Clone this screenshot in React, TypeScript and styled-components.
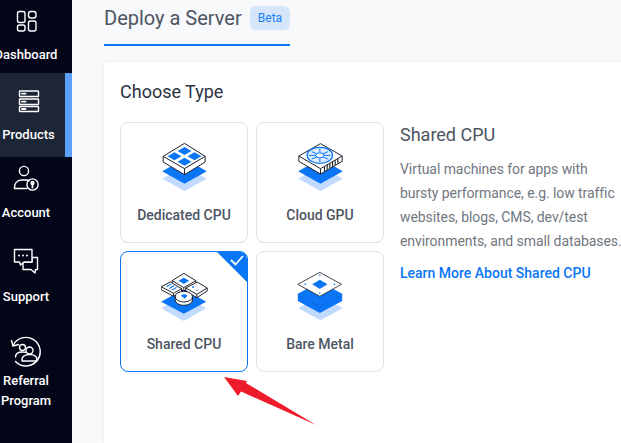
import React from 'react';
import styled, { createGlobalStyle } from 'styled-components';

const GlobalStyle = createGlobalStyle`
  html, body {
    margin: 0;
    padding: 0;
    height: 100%;
    overflow: hidden;
    font-family: Roboto, "Liberation Sans", sans-serif;
  }
`;

const Page = styled.div`
  position: relative;
  display: flex;
  width: 621px;
  height: 443px;
  overflow: hidden;
  background: #f8f9fb;
`;

const Sidebar = styled.nav`
  flex: 0 0 72px;
  width: 72px;
  overflow: hidden;
  background: #020618;
`;

const NavList = styled.div`
  width: 82px;
  margin-left: -10px;
  display: flex;
  flex-direction: column;
`;

const NavItem = styled.div<{ $active?: boolean; $top: number; $bottom: number }>`
  display: flex;
  flex-direction: column;
  align-items: center;
  padding: ${(p) => p.$top}px ${(p) => (p.$active ? 0 : 10)}px ${(p) => p.$bottom}px ${(p) => (p.$active ? 2 : 0)}px;
  background: ${(p) => (p.$active ? '#1d2637' : 'transparent')};
  border-right: ${(p) => (p.$active ? '7px solid #5c9ff6' : '0')};
`;

const NavIcon = styled.div`
  width: 32px;
  height: 32px;
  display: flex;
  align-items: center;
  justify-content: center;
`;

const NavLabel = styled.div<{ $gap?: number }>`
  margin-top: ${(p) => p.$gap ?? 8}px;
  color: #fff;
  font-size: 13px;
  font-weight: 500;
  line-height: 20px;
  text-align: center;
  white-space: nowrap;
`;

const Main = styled.main`
  flex: 1;
  min-width: 0;
  padding-left: 32px;
  display: flex;
  flex-direction: column;
`;

const Header = styled.header`
  width: 186px;
  height: 46px;
  box-sizing: border-box;
  border-bottom: 2px solid #0a76f6;
  display: flex;
  align-items: flex-start;
  justify-content: space-between;
  padding-top: 6px;
`;

const Title = styled.h1`
  margin: 0;
  font-size: 20px;
  font-weight: 400;
  line-height: 24px;
  color: #4d5462;
  white-space: nowrap;
`;

const Badge = styled.span`
  width: 40px;
  height: 24px;
  border-radius: 6px;
  background: #d5e6fb;
  color: #1a7df5;
  font-size: 12px;
  line-height: 24px;
  text-align: center;
`;

const Card = styled.section`
  flex: 1;
  margin-top: 16px;
  margin-right: -8px;
  padding: 18px 0 0 16px;
  background: #fff;
  border-radius: 4px 0 0 0;
  box-shadow: 0 0 3px rgba(30, 40, 60, 0.1);
`;

const CardTitle = styled.h2`
  margin: 0 0 18px;
  font-size: 18px;
  font-weight: 400;
  line-height: 24px;
  color: #2b3240;
`;

const Columns = styled.div`
  display: flex;
  gap: 16px;
`;

const TileGrid = styled.div`
  display: grid;
  grid-template-columns: 128px 128px;
  grid-auto-rows: 121px;
  gap: 8px;
`;

const Tile = styled.div<{ $selected?: boolean }>`
  position: relative;
  overflow: hidden;
  box-sizing: border-box;
  border: 1px solid ${(p) => (p.$selected ? '#0a76f6' : '#dfe1e6')};
  border-radius: 8px;
  background: #fff;
  display: flex;
  flex-direction: column;
  align-items: center;
  padding-top: 19px;
`;

const TileIcon = styled.svg`
  width: 47px;
  height: 50px;
  display: block;
`;

const TileLabel = styled.div`
  margin-top: 13px;
  font-size: 14px;
  font-weight: 500;
  line-height: 20px;
  color: #4d5462;
`;

const CornerCheck = styled.svg`
  position: absolute;
  top: -1px;
  right: -1px;
  width: 32px;
  height: 32px;
`;

const Info = styled.div`
  width: 221px;
  padding-top: 1px;
`;

const InfoTitle = styled.h3`
  margin: 0 0 10px;
  font-size: 18px;
  font-weight: 400;
  line-height: 24px;
  color: #4d5462;
`;

const InfoText = styled.p`
  margin: 0 0 8px;
  font-size: 14px;
  line-height: 24px;
  letter-spacing: -0.07px;
  color: #71777f;
  white-space: nowrap;
`;

const InfoLink = styled.a`
  display: block;
  font-size: 14px;
  font-weight: 500;
  line-height: 24px;
  color: #0a76f6;
`;

const ArrowOverlay = styled.svg`
  position: absolute;
  left: 220px;
  top: 372px;
  width: 100px;
  height: 58px;
  pointer-events: none;
`;

const line = { fill: 'none', stroke: '#fff', strokeWidth: 1.4, strokeLinejoin: 'round', strokeLinecap: 'round' } as const;

const DashboardIcon = () => (
  <svg width="24" height="24" viewBox="0 0 24 24" {...line}>
    <rect x="3.5" y="2.5" width="7.5" height="11" rx="2" />
    <rect x="14.5" y="2.5" width="7.5" height="6.5" rx="2.5" />
    <rect x="3.5" y="16" width="7.5" height="6" rx="2" />
    <rect x="14.5" y="12" width="7.5" height="10" rx="2" />
  </svg>
);

const ProductsIcon = () => (
  <svg width="24" height="24" viewBox="0 0 24 24" {...line}>
    <rect x="2.5" y="2" width="19" height="5.5" rx="0.5" />
    <rect x="2.5" y="10" width="19" height="5.5" rx="0.5" />
    <rect x="2.5" y="17.5" width="19" height="5" rx="0.5" />
    <path d="M5 4.7h3.5M5 12.7h3.5M5 20h3.5" strokeWidth="1.8" />
  </svg>
);

const AccountIcon = () => (
  <svg width="28" height="28" viewBox="0 0 28 28" {...line}>
    <circle cx="12" cy="7" r="4.6" />
    <path d="M2.5 24.5c-.6-5 2.7-8.5 7-8.5h5c1.2 0 2 .2 2.8.6M2.5 24.5h12.5" />
    <circle cx="20.5" cy="20.5" r="5.6" />
    <circle cx="20.5" cy="19" r="1.5" fill="#fff" />
    <path d="M20.5 19.5v4" strokeWidth="1.8" />
  </svg>
);

const SupportIcon = () => (
  <svg width="28" height="28" viewBox="0 0 28 28" {...line}>
    <path d="M20 9.5h5.5v12h-2l-.5 3.500-4-3.500H11v-7.500h9z" fill="#020618" />
    <path d="M2.500 1.500h17.500v12.500H12l-3.500 3-1-3H2.500z" fill="#020618" />
    <circle cx="7" cy="7.5" r="1" fill="#fff" stroke="none" />
    <circle cx="11" cy="7.500" r="1" fill="#fff" stroke="none" />
    <circle cx="15" cy="7.500" r="1" fill="#fff" stroke="none" />
  </svg>
);

const ReferralIcon = () => (
  <svg width="32" height="32" viewBox="0 0 32 32" {...line}>
    <path d="M3 9.500A14.300 14.300 0 1 1 5.500 25.500" />
    <path d="M1.500 4.500L3 10l5.500-1.500" />
    <circle cx="12.500" cy="11.500" r="3" />
    <path d="M5.500 21c0-3.500 3-5 7-5 1.200 0 2 .1 3 .4" />
    <circle cx="19.500" cy="14.500" r="3.500" />
    <path d="M12 25c-.5-4.500 3-6.500 7.500-6.500s8 2 7.500 6.500z" />
  </svg>
);

const BLUE = '#0a76f6';
const PALE = '#c3daff';
const INK = '#20242c';

const Stack = () => (
  <>
    <path d="M3 110L70 72l67 38-67 37z" fill={PALE} />
    <path d="M3 88L70 50l67 38-67 37z" fill={BLUE} />
  </>
);

const DedicatedArt = () => (
  <TileIcon viewBox="0 0 140 150">
    <Stack />
    <path d="M6 43L70 4l62 39v17L70 98 6 60z" fill="#fff" stroke={INK} strokeWidth="3" strokeLinejoin="round" />
    <path d="M6 43l64 37 62-37M70 80v18" fill="none" stroke={INK} strokeWidth="3" />
    <g fill={BLUE}>
      <path d="M70 15l21 12-21 12-21-12z" />
      <path d="M40 31l21 12-21 12-21-12z" />
      <path d="M100 31l21 12-21 12-21-12z" />
      <path d="M70 47l21 12-21 12-21-12z" />
    </g>
  </TileIcon>
);

const GpuArt = () => (
  <TileIcon viewBox="0 0 140 150">
    <Stack />
    <path d="M5 42L70 5l65 37v16L70 96 5 58z" fill="#fff" stroke={INK} strokeWidth="3" strokeLinejoin="round" />
    <path d="M5 42l65 38 65-38M70 80v16" fill="none" stroke={INK} strokeWidth="3" />
    <ellipse cx="68" cy="40" rx="38" ry="24" fill="#dcebff" stroke={BLUE} strokeWidth="4" />
    <ellipse cx="68" cy="40" rx="12" ry="7.500" fill="#fff" stroke={BLUE} strokeWidth="3" />
    <path d="M68 20v11M44 29l14 6M92 29l-14 6M36 40h20M100 40H80M44 51l14-6M92 51l-14-6M68 60V49" stroke={BLUE} strokeWidth="3" fill="none" />
    <path d="M82 87V74M90 83V69M98 78V64M106 74V60M114 69V55M122 64V50" stroke={INK} strokeWidth="3.500" fill="none" />
  </TileIcon>
);

const SharedArt = () => (
  <TileIcon viewBox="0 0 140 150">
    <path d="M0 112L68 74l67 38-67 38z" fill={PALE} />
    <path d="M0 92L68 54l67 38-67 36z" fill={BLUE} />
    <g stroke={INK} strokeWidth="3" strokeLinejoin="round">
      <path d="M68 7l36 22v9L68 60 33 38v-9z" fill="#fff" />
      <path d="M33 29l35 21 36-21M68 50v10" fill="none" />
      <path d="M68 20l16 9-16 10-16-10z" fill={BLUE} stroke="none" />
      <path d="M28 33l33 20v9L37 76 0 56v-9z" fill="#fff" />
      <path d="M0 47l37 20 24-14M37 67v9" fill="none" />
      <path d="M108 33l30 18v9l-31 20-33-20v-9z" fill="#fff" />
      <path d="M74 51l33 19 31-19M107 70v10" fill="none" />
    </g>
    <path d="M15 46l14-8 3 2-14 8zM23 51l14-8 3 2-14 8zM31 56l14-8 3 2-14 8z" fill={BLUE} />
    <path d="M93 46h6v4h-6zM106 56h5v3h-5z" fill={BLUE} />
    <path d="M42 77a26 16 0 0 1 52 0v10a26 16 0 0 1-52 0z" fill="#fff" stroke={INK} strokeWidth="3" />
    <path d="M42 77a26 16 0 0 0 52 0" fill="none" stroke={INK} strokeWidth="3" />
    <path d="M60 75a9 5 0 0 1 18 0l-7 8z" fill={BLUE} />
  </TileIcon>
);

const BareMetalArt = () => (
  <TileIcon viewBox="0 0 140 150">
    <path d="M3 112L70 74l67 38-67 36z" fill={PALE} />
    <path d="M2 68L68 32l67 36v22L68 126 2 90z" fill={BLUE} />
    <path d="M2 72l66 36 67-36" fill="none" stroke="#0a5fd0" strokeWidth="1.500" />
    <path d="M68 4l65 36-65 36L2 40z" fill="#fff" stroke={INK} strokeWidth="2.500" strokeLinejoin="round" />
    <path d="M68 26l23 14-23 14-23-14z" fill={BLUE} />
    <g fill={BLUE}>
      <circle cx="68" cy="13" r="2.500" />
      <circle cx="24" cy="40" r="2.500" />
      <circle cx="112" cy="40" r="2.500" />
      <circle cx="68" cy="66" r="2.500" />
    </g>
  </TileIcon>
);

export default function App() {
  return (
    <Page>
      <GlobalStyle />
      <Sidebar>
        <NavList>
          <NavItem $top={5} $bottom={8}>
            <NavIcon><DashboardIcon /></NavIcon>
            <NavLabel>Dashboard</NavLabel>
          </NavItem>
          <NavItem $active $top={12} $bottom={12}>
            <NavIcon><ProductsIcon /></NavIcon>
            <NavLabel>Products</NavLabel>
          </NavItem>
          <NavItem $top={5} $bottom={11}>
            <NavIcon><AccountIcon /></NavIcon>
            <NavLabel $gap={9}>Account</NavLabel>
          </NavItem>
          <NavItem $top={12} $bottom={12}>
            <NavIcon><SupportIcon /></NavIcon>
            <NavLabel $gap={9}>Support</NavLabel>
          </NavItem>
          <NavItem $top={17} $bottom={0}>
            <NavIcon><ReferralIcon /></NavIcon>
            <NavLabel $gap={3}>Referral<br />Program</NavLabel>
          </NavItem>
        </NavList>
      </Sidebar>
      <Main>
        <Header>
          <Title>Deploy a Server</Title>
          <Badge>Beta</Badge>
        </Header>
        <Card>
          <CardTitle>Choose Type</CardTitle>
          <Columns>
            <TileGrid>
              <Tile>
                <DedicatedArt />
                <TileLabel>Dedicated CPU</TileLabel>
              </Tile>
              <Tile>
                <GpuArt />
                <TileLabel>Cloud GPU</TileLabel>
              </Tile>
              <Tile $selected>
                <SharedArt />
                <TileLabel>Shared CPU</TileLabel>
                <CornerCheck viewBox="0 0 32 32">
                  <path d="M0 0h32v32z" fill={BLUE} />
                  <path d="M15 9l4.500 4.500L27 5" fill="none" stroke="#fff" strokeWidth="1.800" />
                </CornerCheck>
              </Tile>
              <Tile>
                <BareMetalArt />
                <TileLabel>Bare Metal</TileLabel>
              </Tile>
            </TileGrid>
            <Info>
              <InfoTitle>Shared CPU</InfoTitle>
              <InfoText>
                Virtual machines for apps with<br />
                bursty performance, e.g. low traffic<br />
                websites, blogs, CMS, dev/test<br />
                environments, and small databases.
              </InfoText>
              <InfoLink>Learn More About Shared CPU</InfoLink>
            </Info>
          </Columns>
        </Card>
      </Main>
      <ArrowOverlay viewBox="0 0 100 58">
        <path d="M4 5L27 9 26 11 96 53 21 19.500 18 24z" fill="#ee1c2b" />
      </ArrowOverlay>
    </Page>
  );
}
